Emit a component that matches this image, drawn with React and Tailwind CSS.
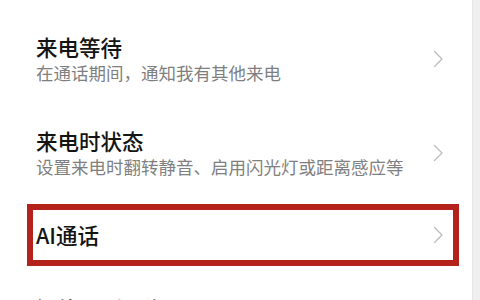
const rows = [
  { title: '来电等待', desc: '在通话期间，通知我有其他来电' },
  { title: '来电时状态', desc: '设置来电时翻转静音、启用闪光灯或距离感应等' },
  { title: 'AI通话', highlight: true },
  { title: '智能识别陌生号码', desc: '', last: true },
];

function Chevron() {
  return (
    <svg width="11" height="18" viewBox="0 0 11 18" fill="none" className="shrink-0">
      <path d="M1.5 1.5 L9 9 L1.5 16.5" stroke="#bcbcbc" strokeWidth="1.3" strokeLinecap="round" strokeLinejoin="round" />
    </svg>
  );
}

export default function App() {
  return (
    <div
      className="flex h-[300px] w-[480px] overflow-hidden bg-white"
      style={{ fontFamily: '"Noto Sans CJK SC", "Noto Sans", sans-serif' }}
    >
      <div className="flex flex-1 flex-col pt-[12px]">
        {rows.map(row => (
          <div
            key={row.title}
            className={`relative flex items-center pl-[36px] pr-[28px] py-[21px] ${row.last ? 'mt-[4px]' : ''}`}
          >
            <div className="flex flex-1 flex-col">
              <p className="text-[21.5px] leading-[28px] font-medium text-[#141414]">{row.title}</p>
              {row.desc && (
                <p className="text-[17.5px] leading-[24px] text-[#7f7f7f]">{row.desc}</p>
              )}
            </div>
            <Chevron />
            {row.highlight && (
              <div className="pointer-events-none absolute top-[4px] bottom-[4px] left-[27px] right-[13px] border-[6px] border-[#b3231b]" />
            )}
          </div>
        ))}
      </div>
      {/* Scrollbar strip */}
      <div className="w-[8px] bg-[#efefef] border-l border-[#e6e6e6]" />
    </div>
  );
}
